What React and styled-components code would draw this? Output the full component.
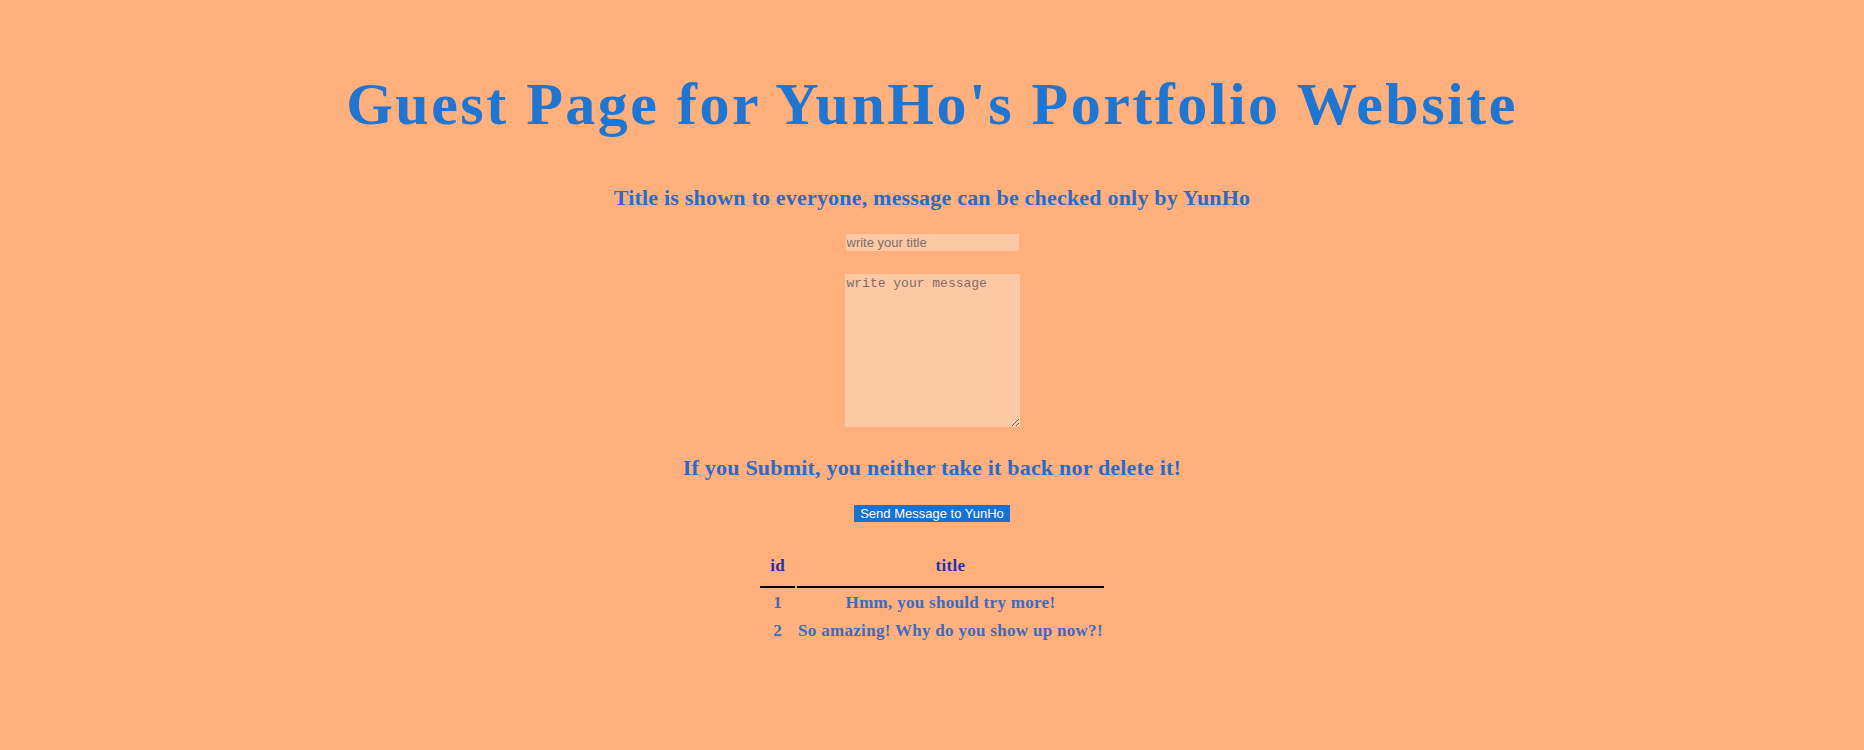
import React, { useState } from 'react';
import styled, { createGlobalStyle } from 'styled-components';

const GlobalStyle = createGlobalStyle`
  html, body {
    margin: 0;
    padding: 0;
    background: #ffb07c;
  }
  body {
    font-family: 'Liberation Serif', 'DejaVu Serif', serif;
  }
`;

const Page = styled.div`
  display: flex;
  flex-direction: column;
  align-items: center;
  min-height: 750px;
  padding-top: 68px;
  box-sizing: border-box;
`;

const Heading = styled.h1`
  margin: 0;
  font-size: 60px;
  font-weight: 700;
  line-height: 1.2;
  letter-spacing: 2.5px;
  color: #1f75d2;
`;

const Notice = styled.h3`
  margin: ${(p) => p.$top}px 0 0;
  font-size: 22px;
  font-weight: 700;
  line-height: 1.2;
  letter-spacing: 0.2px;
  color: #2a6bc8;
`;

const Form = styled.form`
  display: flex;
  flex-direction: column;
  align-items: center;
`;

const TitleInput = styled.input`
  margin-top: 23px;
  width: 173px;
  height: 17px;
  padding: 0 1px;
  box-sizing: border-box;
  border: none;
  outline: none;
  background: #fdc8a4;
  font-family: 'Liberation Sans', Arial, sans-serif;
  font-size: 13px;
  color: #333;

  &::placeholder {
    color: #7d6e65;
  }
`;

const MessageArea = styled.textarea`
  margin-top: 23px;
  width: 175px;
  height: 153px;
  padding: 2px;
  box-sizing: border-box;
  border: none;
  outline: none;
  background: #fdc8a4;
  font-family: 'Liberation Mono', 'DejaVu Sans Mono', monospace;
  font-size: 13px;
  color: #333;

  &::placeholder {
    color: #7d6e65;
  }
`;

const SendButton = styled.button`
  margin-top: 23px;
  height: 17px;
  padding: 0 6px;
  border: none;
  background: #1872d2;
  color: #fff;
  font-family: 'Liberation Sans', Arial, sans-serif;
  font-size: 13px;
  line-height: 17px;
  cursor: pointer;
`;

const Board = styled.table`
  margin-top: 24px;
  border-spacing: 2px;
  font-size: 17px;
  font-weight: 700;
  letter-spacing: 0.3px;
`;

const HeadCell = styled.th`
  padding: 8px 2px 10px;
  color: #2434a8;
  border-bottom: 2px solid #000;
  width: ${(p) => p.$w}px;
`;

const Cell = styled.td`
  padding: 3px 1px;
  text-align: center;
  color: #3a6bc0;
`;

const posts = [
  { id: 1, title: 'Hmm, you should try more!' },
  { id: 2, title: 'So amazing! Why do you show up now?!' },
];

const App = () => {
  const [title, setTitle] = useState('');
  const [message, setMessage] = useState('');

  return (
    <>
      <GlobalStyle />
      <Page>
        <Heading>Guest Page for YunHo's Portfolio Website</Heading>
        <Notice $top={45}>
          Title is shown to everyone, message can be checked only by YunHo
        </Notice>
        <Form onSubmit={(e) => e.preventDefault()}>
          <TitleInput
            placeholder="write your title"
            value={title}
            onChange={(e) => setTitle(e.target.value)}
          />
          <MessageArea
            placeholder="write your message"
            value={message}
            onChange={(e) => setMessage(e.target.value)}
          />
          <Notice $top={28}>
            If you Submit, you neither take it back nor delete it!
          </Notice>
          <SendButton type="submit">Send Message to YunHo</SendButton>
        </Form>
        <Board>
          <thead>
            <tr>
              <HeadCell $w={31}>id</HeadCell>
              <HeadCell>title</HeadCell>
            </tr>
          </thead>
          <tbody>
            {posts.map((post) => (
              <tr key={post.id}>
                <Cell>{post.id}</Cell>
                <Cell>{post.title}</Cell>
              </tr>
            ))}
          </tbody>
        </Board>
      </Page>
    </>
  );
};

export default App;
